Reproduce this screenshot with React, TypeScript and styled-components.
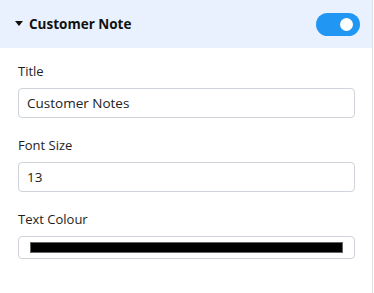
import React, { useState } from "react";
import styled, { createGlobalStyle } from "styled-components";

const Global = createGlobalStyle`
  html, body { margin: 0; padding: 0; background: #ffffff; }
  body { font-family: "Open Sans", "Noto Sans", sans-serif; color: #212529; }
  * { box-sizing: border-box; }
`;

const Panel = styled.div`
  width: 373px;
  height: 293px;
  border-right: 1px solid #dfe2e6;
  background: #ffffff;
  display: flex;
  flex-direction: column;
`;

const Header = styled.div`
  height: 48px;
  background: #e8f1fd;
  display: flex;
  align-items: center;
  justify-content: space-between;
  padding: 0 12px 0 15px;
`;

const HeaderTitle = styled.div`
  display: flex;
  align-items: center;
  gap: 6px;
  font-size: 13.5px;
  font-weight: 700;
  color: #111111;
`;

const Caret = styled.span`
  width: 0;
  height: 0;
  border-left: 4.5px solid transparent;
  border-right: 4.5px solid transparent;
  border-top: 5px solid #111111;
  margin-top: -2px;
`;

const Toggle = styled.button<{ $on: boolean }>`
  position: relative;
  width: 44px;
  height: 23px;
  border: none;
  padding: 0;
  border-radius: 12px;
  background: ${(p) => (p.$on ? "#2196f3" : "#c7cdd4")};
  cursor: pointer;
`;

const Knob = styled.span<{ $on: boolean }>`
  position: absolute;
  top: 5px;
  left: ${(p) => (p.$on ? "24px" : "6px")};
  width: 13px;
  height: 13px;
  border-radius: 50%;
  background: #ffffff;
`;

const Body = styled.div`
  padding: 13px 18px 0 18px;
  display: flex;
  flex-direction: column;
  gap: 17px;
`;

const Field = styled.div`
  display: flex;
  flex-direction: column;
  gap: 7px;
`;

const Label = styled.label`
  font-size: 13px;
  font-weight: 500;
  color: #1e1e1e;
  line-height: 20px;
`;

const TextInput = styled.input`
  width: 337px;
  height: 30px;
  border: 1px solid #ced4da;
  border-radius: 4px;
  padding: 0 8px;
  font-family: "Open Sans", "Noto Sans", sans-serif;
  font-size: 13.5px;
  color: #222222;
  outline: none;
  background: #ffffff;
`;

const ColourBox = styled.div`
  width: 337px;
  height: 23px;
  border: 1px solid #ced4da;
  border-radius: 4px;
  padding: 5px 11px;
  display: flex;
`;

const Swatch = styled.div<{ $color: string }>`
  flex: 1;
  background: ${(p) => p.$color};
  border: 1px solid #666666;
`;

export default function App() {
  const [on, setOn] = useState(true);
  return (
    <>
      <Global />
      <Panel>
        <Header>
          <HeaderTitle>
            <Caret />
            Customer Note
          </HeaderTitle>
          <Toggle $on={on} onClick={() => setOn(!on)} aria-label="toggle">
            <Knob $on={on} />
          </Toggle>
        </Header>
        <Body>
          <Field>
            <Label>Title</Label>
            <TextInput defaultValue="Customer Notes" />
          </Field>
          <Field>
            <Label>Font Size</Label>
            <TextInput defaultValue="13" />
          </Field>
          <Field>
            <Label>Text Colour</Label>
            <ColourBox>
              <Swatch $color="#000000" />
            </ColourBox>
          </Field>
        </Body>
      </Panel>
    </>
  );
}
